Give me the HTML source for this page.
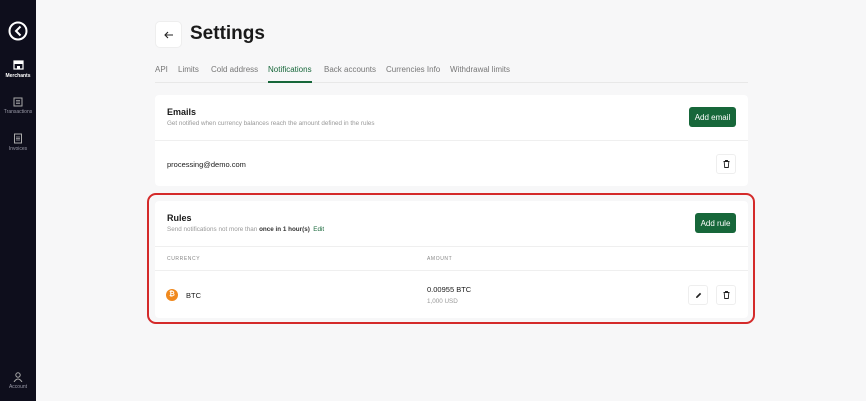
<!DOCTYPE html>
<html><head><style>
*{margin:0;padding:0;box-sizing:border-box}
body{width:866px;height:401px;background:#f7f7f8;font-family:"Liberation Sans",sans-serif;position:relative;overflow:hidden;color:#1a1a1a}
.sb{position:absolute;left:0;top:0;width:36px;height:401px;background:#0e0e1c}
.sb .it{position:absolute;left:0;width:36px;text-align:center;color:#9a9aa8;font-size:5px}
.abs{position:absolute}
.card{position:absolute;left:155px;width:593px;background:#fff;border-radius:4px}
.btn{position:absolute;background:#17673a;color:#fff;font-size:8px;border-radius:3px;display:flex;align-items:center;justify-content:center}
.ib{position:absolute;width:20px;height:20px;border:1px solid #eee;border-radius:3px;background:#fff;display:flex;align-items:center;justify-content:center}
.hr{position:absolute;left:0;right:0;height:1px;background:#efefef}
.sub{font-size:6.3px;color:#999;white-space:nowrap}
</style></head><body>
<div class="sb">
 <svg class="abs" style="left:8px;top:21px" width="20" height="20" viewBox="0 0 20 20"><circle cx="10" cy="10" r="8.5" fill="none" stroke="#fff" stroke-width="2"/><path d="M12.5 5.5 L8 10 L12.5 14.5" fill="none" stroke="#fff" stroke-width="2"/></svg>
 <div class="it" style="top:60px"><svg width="11" height="10" viewBox="0 0 11 10"><rect x="1" y="1" width="9" height="8" fill="none" stroke="#fff" stroke-width="1.2"/><rect x="1" y="1" width="9" height="3" fill="#fff"/><rect x="4" y="6" width="3" height="3" fill="#fff"/></svg><div style="color:#fff;font-weight:bold;margin-top:1px">Merchants</div></div>
 <div class="it" style="top:97px"><svg width="10" height="10" viewBox="0 0 10 10"><rect x="1" y="1" width="8" height="8" fill="none" stroke="#aaa"/><path d="M3 3.5h4M3 5h4M3 6.5h4" stroke="#aaa" stroke-width=".8"/></svg><div>Transactions</div></div>
 <div class="it" style="top:133px"><svg width="10" height="11" viewBox="0 0 10 11"><rect x="1.5" y="1" width="7" height="9" fill="none" stroke="#aaa"/><path d="M3 4h4M3 5.5h4M3 7h4" stroke="#aaa" stroke-width=".8"/></svg><div>Invoices</div></div>
 <div class="it" style="top:372px"><svg width="10" height="10" viewBox="0 0 10 10"><circle cx="5" cy="3" r="2.2" fill="none" stroke="#aaa"/><path d="M1 10 Q5 4 9 10" fill="none" stroke="#aaa"/></svg><div>Account</div></div>
</div>
<div class="abs" style="left:155px;top:21px;width:27px;height:27px;background:#fff;border:1px solid #eee;border-radius:5px;display:flex;align-items:center;justify-content:center"><svg width="10" height="8" viewBox="0 0 10 8"><path d="M9 4H1M4 1L1 4l3 3" fill="none" stroke="#222" stroke-width="1.1"/></svg></div>
<div class="abs" style="left:190px;top:23px;font-size:19px;font-weight:bold">Settings</div>
<div class="abs" style="left:155px;top:65px;font-size:8px;color:#777;white-space:nowrap">
<span style="position:absolute;left:0">API</span><span style="position:absolute;left:23px">Limits</span><span style="position:absolute;left:56px">Cold address</span><span style="position:absolute;left:113px;color:#17673a">Notifications</span><span style="position:absolute;left:169px">Back accounts</span><span style="position:absolute;left:231px">Currencies Info</span><span style="position:absolute;left:295px">Withdrawal limits</span></div>
<div class="abs" style="left:155px;top:82px;width:593px;height:1px;background:#e8e8e8"></div>
<div class="abs" style="left:268px;top:81px;width:44px;height:2px;background:#17673a"></div>

<div class="card" style="top:95px;height:91px">
 <div class="abs" style="left:12px;top:12px;font-size:9px;font-weight:bold">Emails</div>
 <div class="abs sub" style="left:12px;top:25px">Get notified when currency balances reach the amount defined in the rules</div>
 <div class="btn" style="left:534px;top:12px;width:47px;height:20px">Add email</div>
 <div class="hr" style="top:45px"></div>
 <div class="abs" style="left:12px;top:65px;font-size:7.5px">processing@demo.com</div>
 <div class="ib" style="left:561px;top:59px"><svg width="7" height="8" viewBox="0 0 7 8"><path d="M0.5 1.5h6M2.5 1.5V.5h2v1M1.2 1.5l.5 6h3.6l.5-6" fill="none" stroke="#222" stroke-width=".9"/></svg></div>
</div>

<div class="abs" style="left:147px;top:193px;width:608px;height:131px;border:2px solid #d42a2a;border-radius:9px"></div>
<div class="card" style="top:201px;height:117px">
 <div class="abs" style="left:12px;top:12px;font-size:9px;font-weight:bold">Rules</div>
 <div class="abs sub" style="left:12px;top:25px">Send notifications not more than <b style="color:#333">once in 1 hour(s)</b> &nbsp;<span style="color:#17673a">Edit</span></div>
 <div class="btn" style="left:540px;top:12px;width:41px;height:20px">Add rule</div>
 <div class="hr" style="top:45px"></div>
 <div class="abs" style="left:12px;top:55px;font-size:5px;color:#888;letter-spacing:.6px">CURRENCY</div>
 <div class="abs" style="left:272px;top:55px;font-size:5px;color:#888;letter-spacing:.6px">AMOUNT</div>
 <div class="hr" style="top:69px"></div>
 <div class="abs" style="left:11px;top:88px;width:12px;height:12px;border-radius:50%;background:#f0891e;color:#fff;font-size:7px;text-align:center;line-height:12px;font-weight:bold">₿</div>
 <div class="abs" style="left:31px;top:90px;font-size:7.5px">BTC</div>
 <div class="abs" style="left:272px;top:84px;font-size:7.5px">0.00955 BTC</div>
 <div class="abs sub" style="left:272px;top:97px">1,000 USD</div>
 <div class="ib" style="left:533px;top:84px"><svg width="7" height="7" viewBox="0 0 7 7"><path d="M1 6l.3-1.5L5 .8 6.2 2 2.5 5.7z" fill="#222"/></svg></div>
 <div class="ib" style="left:561px;top:84px"><svg width="7" height="8" viewBox="0 0 7 8"><path d="M0.5 1.5h6M2.5 1.5V.5h2v1M1.2 1.5l.5 6h3.6l.5-6" fill="none" stroke="#222" stroke-width=".9"/></svg></div>
</div>
</body></html>
